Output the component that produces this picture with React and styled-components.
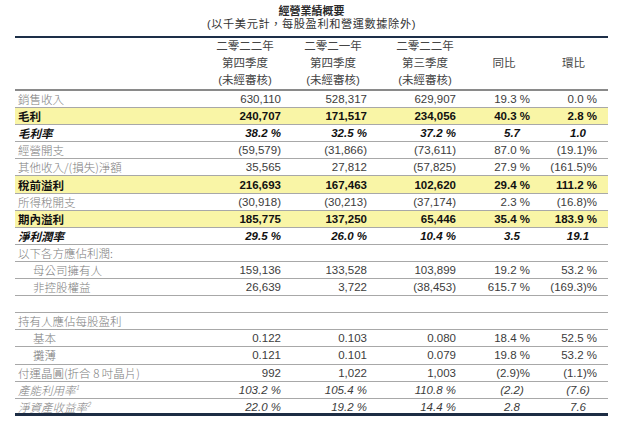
import React from 'react';
import styled, { createGlobalStyle } from 'styled-components';

const rows = [
    { label: '銷售收入', kind: 'plain', vals: ['630,110', '528,317', '629,907', '19.3 %', '0.0 %'] },
    { label: '毛利', kind: 'bold', vals: ['240,707', '171,517', '234,056', '40.3 %', '2.8 %'] },
    { label: '毛利率', kind: 'ratio', vals: ['38.2 %', '32.5 %', '37.2 %', '5.7', '1.0'] },
    { label: '經營開支', kind: 'plain', vals: ['(59,579)', '(31,866)', '(73,611)', '87.0 %', '(19.1)%'] },
    { label: '其他收入/(損失)淨額', kind: 'plain', vals: ['35,565', '27,812', '(57,825)', '27.9 %', '(161.5)%'] },
    { label: '稅前溢利', kind: 'bold', vals: ['216,693', '167,463', '102,620', '29.4 %', '111.2 %'] },
    { label: '所得稅開支', kind: 'plain', vals: ['(30,918)', '(30,213)', '(37,174)', '2.3 %', '(16.8)%'] },
    { label: '期內溢利', kind: 'bold', vals: ['185,775', '137,250', '65,446', '35.4 %', '183.9 %'] },
    { label: '淨利潤率', kind: 'ratio', vals: ['29.5 %', '26.0 %', '10.4 %', '3.5', '19.1'] },
    { label: '以下各方應佔利潤:', kind: 'plain', vals: [] },
    { label: '母公司擁有人', kind: 'plain', indent: true, vals: ['159,136', '133,528', '103,899', '19.2 %', '53.2 %'] },
    { label: '非控股權益', kind: 'plain', indent: true, vals: ['26,639', '3,722', '(38,453)', '615.7 %', '(169.3)%'] },
    { label: '', kind: 'plain', vals: [] },
    { label: '持有人應佔每股盈利', kind: 'plain', vals: [] },
    { label: '基本', kind: 'plain', indent: true, vals: ['0.122', '0.103', '0.080', '18.4 %', '52.5 %'] },
    { label: '攤薄', kind: 'plain', indent: true, vals: ['0.121', '0.101', '0.079', '19.8 %', '53.2 %'] },
    { label: '付運晶圓(折合 8 吋晶片)', kind: 'plain', vals: ['992', '1,022', '1,003', '(2.9)%', '(1.1)%'] },
    { label: '產能利用率', sup: '1', kind: 'italic', vals: ['103.2 %', '105.4 %', '110.8 %', '(2.2)', '(7.6)'] },
    { label: '淨資產收益率', sup: '2', kind: 'italic', vals: ['22.0 %', '19.2 %', '14.4 %', '2.8', '7.6'] },
];

// right padding per value column, and left padding for the centred ratio cells
const padRight = [4, 14, 13, 9, 11];
const centerPad = [0, 0, 0, 16, 9];

const App = () => (
    <Page>
        <GlobalStyle />
        <Sheet>
            <Title>經營業績概要</Title>
            <Subtitle>(以千美元計，每股盈利和營運數據除外)</Subtitle>
            <HeaderRow>
                <span />
                <HeadCell>二零二二年<br />第四季度<br />(未經審核)</HeadCell>
                <HeadCell>二零二一年<br />第四季度<br />(未經審核)</HeadCell>
                <HeadCell>二零二二年<br />第三季度<br />(未經審核)</HeadCell>
                <HeadCell>同比</HeadCell>
                <HeadCell>環比</HeadCell>
            </HeaderRow>
            {rows.map((row, i) => (
                <Row key={i} kind={row.kind} last={i === rows.length - 1}>
                    <Label kind={row.kind} indent={row.indent}>
                        {row.label}
                        {row.sup ? <sup>{row.sup}</sup> : null}
                    </Label>
                    {[0, 1, 2, 3, 4].map(c => {
                        const centered = (row.kind === 'ratio' || row.kind === 'italic') && c > 2;
                        return (
                            <Value
                                key={c}
                                kind={row.kind}
                                pr={centered ? 0 : padRight[c]}
                                pl={centered ? centerPad[c] : 0}
                                centered={centered}>
                                {row.vals[c] || ''}
                            </Value>
                        );
                    })}
                </Row>
            ))}
        </Sheet>
    </Page>
);

export default App;

const GlobalStyle = createGlobalStyle`
    html, body {
        margin: 0;
        padding: 0;
        background: #fff;
    }
    body {
        font-family: "Liberation Sans", "Noto Sans CJK TC", Arial, sans-serif;
    }
`;

const Page = styled.div`
    width: 629px;
    height: 426px;
    background: #fff;
    overflow: hidden;
    padding-top: 5px;
    box-sizing: border-box;
`;

const Sheet = styled.div`
    margin-left: 15px;
    width: 593px;
`;

const Title = styled.div`
    text-align: center;
    font-family: "Liberation Sans", "Noto Sans CJK TC", sans-serif;
    font-weight: 700;
    font-size: 11px;
    line-height: 13px;
    color: #2a2a2a;
`;

const Subtitle = styled.div`
    text-align: center;
    font-family: "Liberation Sans", "Noto Sans CJK TC", sans-serif;
    font-size: 11.2px;
    line-height: 13px;
    letter-spacing: 0.6px;
    color: #333;
    padding-bottom: 5px;
    border-bottom: 2px solid #1d2f48;
`;

const grid = `
    display: grid;
    grid-template-columns: 190px 80px 96px 88px 70px 69px;
    align-items: center;
`;

const HeaderRow = styled.div`
    ${grid}
    height: 53px;
    box-sizing: border-box;
    border-bottom: 2px solid #8a8a8a;
`;

const HeadCell = styled.div`
    text-align: center;
    font-family: "Liberation Sans", "Noto Sans CJK TC", sans-serif;
    font-size: 11.5px;
    line-height: 17px;
    color: #444;
`;

const Row = styled.div`
    ${grid}
    height: 17.1px;
    box-sizing: border-box;
    background: ${props => props.kind === 'bold' ? '#f9f5a6' : 'transparent'};
    border-bottom: ${props => props.last ? '3px solid #1d2d44' : '1px solid #a8a8a8'};
`;

const Label = styled.div`
    padding-left: ${props => props.indent ? '18px' : '3px'};
    font-family: "Noto Sans CJK TC", sans-serif;
    font-size: 11.5px;
    line-height: 16px;
    white-space: nowrap;
    color: ${props => (props.kind === 'bold' || props.kind === 'ratio') ? '#111' : '#7d7d7d'};
    font-weight: ${props => (props.kind === 'bold' || props.kind === 'ratio') ? 700 : 300};
    font-style: ${props => (props.kind === 'ratio' || props.kind === 'italic') ? 'italic' : 'normal'};

    sup {
        font-size: 7px;
        line-height: 0;
        vertical-align: 5px;
    }
`;

const Value = styled.div`
    text-align: ${props => props.centered ? 'center' : 'right'};
    padding-right: ${props => props.pr}px;
    padding-left: ${props => props.pl}px;
    font-family: "Liberation Sans", Arial, sans-serif;
    font-size: 11.5px;
    line-height: 16px;
    white-space: nowrap;
    color: ${props => (props.kind === 'bold' || props.kind === 'ratio') ? '#111' : '#3c3c3c'};
    font-weight: ${props => (props.kind === 'bold' || props.kind === 'ratio') ? 700 : 400};
    font-style: ${props => (props.kind === 'ratio' || props.kind === 'italic') ? 'italic' : 'normal'};
`;
